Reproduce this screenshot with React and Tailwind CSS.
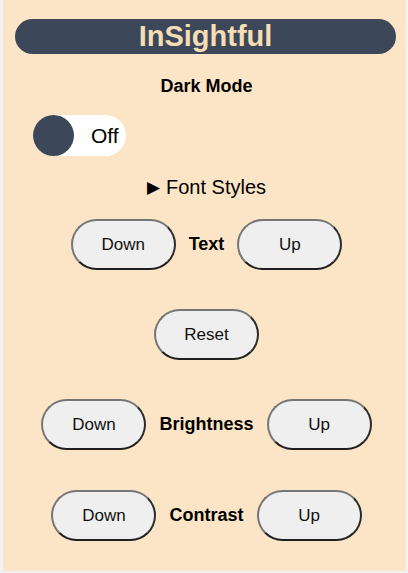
import React from "react";

function PillButton({ children }) {
  return (
    <button className="w-[105px] h-[51px] shrink-0 rounded-full bg-[#efefef] border-2 border-[#767676] border-b-[#1f1f1f] border-r-[#2b2b2b] text-[17px] text-[#111] font-['Liberation_Sans',Arial,sans-serif]">
      {children}
    </button>
  );
}

function AdjustRow({ label, className = "" }) {
  return (
    <div className={"flex items-center gap-[13px] " + className}>
      <PillButton>Down</PillButton>
      <span className="text-[18px] font-bold text-black">{label}</span>
      <PillButton>Up</PillButton>
    </div>
  );
}

export default function App() {
  return (
    <div className="w-[408px] h-[573px] bg-[#f2f2f2] font-['Liberation_Sans',Arial,sans-serif]">
      <div className="ml-[3px] w-[403px] h-[571px] pl-[4px] bg-[#fce4c6] flex flex-col items-center">
        <div className="mt-[19px] w-[381px] ml-[8px] self-start h-[35px] rounded-full bg-[#3c4759] flex items-center justify-center">
          <span className="text-[29px] leading-none font-bold text-[#f5deb5]">InSightful</span>
        </div>

        <p className="mt-[21px] text-[18px] leading-[22px] font-bold text-black">Dark Mode</p>

        <div className="mt-[18px] self-start ml-[26px] w-[93px] h-[41px] rounded-full bg-white flex items-center">
          <div className="w-[41px] h-[41px] rounded-full bg-[#3c4759]" />
          <span className="ml-[17px] text-[21px] text-black">Off</span>
        </div>

        <div className="mt-[19px] flex items-center gap-[6px] text-[20px] leading-[24px] text-black">
          <span className="text-[17px] leading-none">▶</span>
          <span>Font Styles</span>
        </div>

        <AdjustRow label="Text" className="mt-[20px]" />

        <div className="mt-[39px]">
          <PillButton>Reset</PillButton>
        </div>

        <AdjustRow label="Brightness" className="mt-[39px]" />
        <AdjustRow label="Contrast" className="mt-[40px]" />
      </div>
    </div>
  );
}
